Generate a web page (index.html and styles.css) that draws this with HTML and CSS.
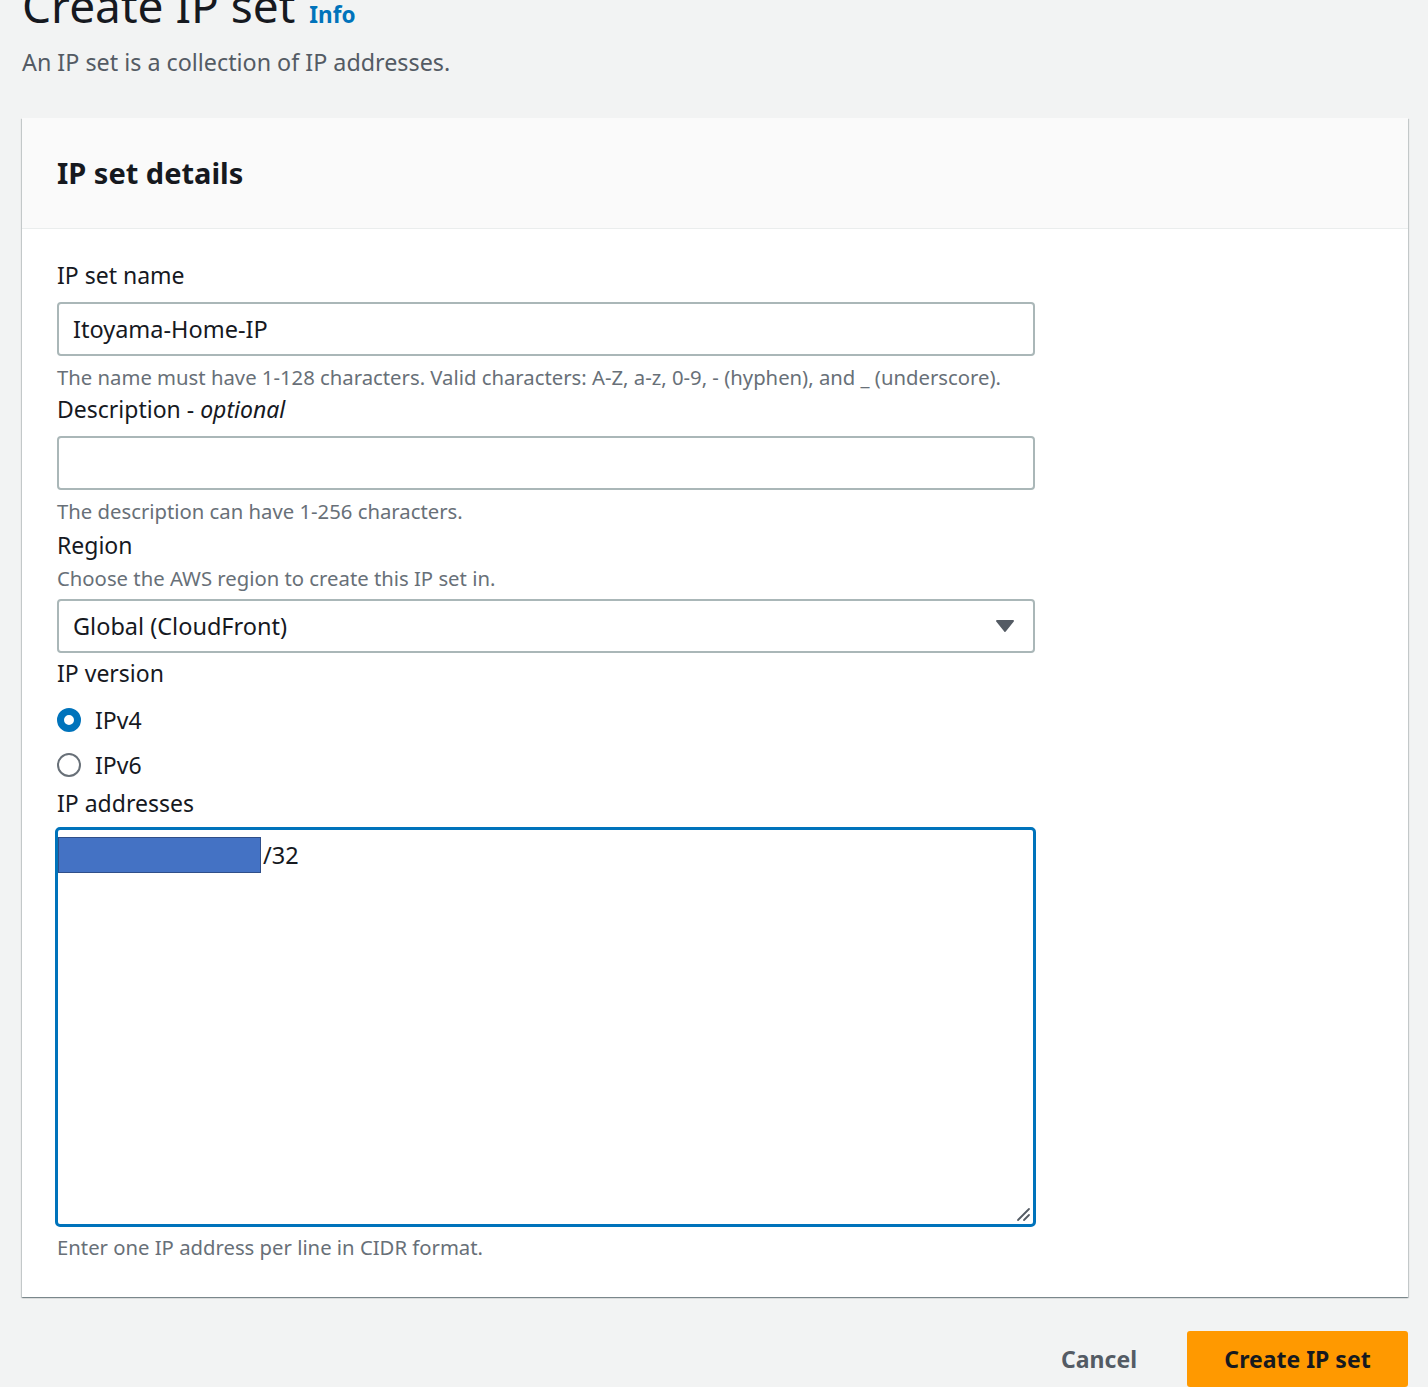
FILE: index.html
```html
<!DOCTYPE html>
<html lang="en">
<head>
<meta charset="utf-8">
<title>Create IP set</title>
<link rel="stylesheet" href="styles.css">
</head>
<body>
<div class="page">
  <header class="page-head">
    <h1 class="title">Create IP set <a class="info" href="#">Info</a></h1>
    <p class="subtitle">An IP set is a collection of IP addresses.</p>
  </header>

  <section class="card">
    <div class="card-head">
      <h2 class="card-title">IP set details</h2>
    </div>
    <div class="card-body">
      <div class="field">
        <label class="label">IP set name</label>
        <div class="input">Itoyama-Home-IP</div>
        <p class="help">The name must have 1-128 characters. Valid characters: A-Z, a-z, 0-9, - (hyphen), and _ (underscore).</p>
      </div>
      <div class="field">
        <label class="label">Description - <i>optional</i></label>
        <div class="input"></div>
        <p class="help">The description can have 1-256 characters.</p>
      </div>
      <div class="field field-region">
        <label class="label">Region</label>
        <p class="desc">Choose the AWS region to create this IP set in.</p>
        <div class="input select">
          <span>Global (CloudFront)</span>
          <svg class="caret" width="20" height="14" viewBox="0 0 20 14"><path d="M2 2 H18 L10 12 Z" fill="#545b64" stroke="#545b64" stroke-width="2" stroke-linejoin="round"/></svg>
        </div>
      </div>
      <div class="field field-radio">
        <label class="label">IP version</label>
        <div class="radios">
          <div class="radio-row"><span class="radio checked"></span><span>IPv4</span></div>
          <div class="radio-row"><span class="radio"></span><span>IPv6</span></div>
        </div>
      </div>
      <div class="field field-ta">
        <label class="label">IP addresses</label>
        <div class="textarea">
          <div class="ip-line"><span class="redact"></span><span>/32</span></div>
          <svg class="grip" width="16" height="16" viewBox="0 0 16 16"><path d="M3 14 L14 3 M9 14 L14 9" stroke="#545b64" stroke-width="1.8" stroke-linecap="round" fill="none"/></svg>
        </div>
        <p class="help">Enter one IP address per line in CIDR format.</p>
      </div>
    </div>
  </section>

  <div class="actions">
    <button class="btn-link">Cancel</button>
    <button class="btn-primary">Create IP set</button>
  </div>
</div>
</body>
</html>
```

FILE: styles.css
```css
* { box-sizing: border-box; }
html, body { margin: 0; padding: 0; }
body {
  background: #f2f3f3;
  font-family: "Noto Sans", "Open Sans", sans-serif;
  color: #16191f;
  overflow: hidden;
}
.page {
  padding: 0 20px 0 22px;
}
.page-head {
  margin-top: -19px;
}
.title {
  margin: 0;
  font-size: 46px;
  line-height: 48px;
  font-weight: 400;
  color: #16191f;
}
.info {
  font-size: 22.5px;
  font-weight: 700;
  color: #0073bb;
  text-decoration: none;
  margin-left: 2px;
}
.subtitle {
  margin: 7px 0 0;
  font-size: 23.3px;
  line-height: 32px;
  color: #545b64;
}
.card {
  margin-top: 40px;
  background: #fff;
  box-shadow: 0 1px 1px 0 rgba(0,28,36,0.3), 1px 1px 1px 0 rgba(0,28,36,0.15), -1px 1px 1px 0 rgba(0,28,36,0.15);
}
.card-head {
  height: 111px;
  display: flex;
  align-items: center;
  padding: 0 35px;
  background: #fafafa;
  border-bottom: 1px solid #eaeded;
}
.card-title {
  margin: 0;
  font-size: 29px;
  font-weight: 700;
  line-height: 40px;
}
.card-body {
  padding: 30px 35px 36px;
  display: flex;
  flex-direction: column;
  gap: 2px;
}
.field {
  display: flex;
  flex-direction: column;
  width: 978px;
}
.label {
  font-size: 23px;
  line-height: 32px;
  color: #16191f;
  margin-bottom: 11px;
}
.label i { font-style: italic; }
.input {
  height: 54px;
  border: 2px solid #aab7b8;
  border-radius: 4px;
  background: #fff;
  padding: 0 14px;
  display: flex;
  align-items: center;
  font-size: 23.5px;
  color: #16191f;
}
.help {
  margin: 7px 0 0;
  font-size: 20.3px;
  line-height: 28px;
  color: #687078;
}
.field-region {
  margin-top: 2px;
}
.desc {
  margin: -8px 0 7px;
  font-size: 20.3px;
  line-height: 28px;
  color: #687078;
}
.select {
  justify-content: space-between;
  padding-right: 18px;
}
.caret { display: block; }
.field-radio {
  margin-top: 2px;
}
.radios {
  display: flex;
  flex-direction: column;
  gap: 13px;
  margin-top: 4px;
  margin-bottom: 3px;
}
.radio-row {
  display: flex;
  align-items: center;
  gap: 14px;
  height: 32px;
  font-size: 23px;
}
.radio {
  width: 24px;
  height: 24px;
  border-radius: 50%;
  border: 2px solid #687078;
  background: #fff;
  flex: none;
}
.radio.checked {
  border: 7px solid #0073bb;
}
.field-ta {
  margin-top: 1px;
}
.field-ta .label {
  margin-bottom: 8px;
}
.field-ta .help {
  margin-top: 6px;
}
.textarea {
  position: relative;
  height: 400px;
  border: 3px solid #0073bb;
  border-radius: 5px;
  background: #fff;
  margin-left: -2px;
  width: 981px;
  padding: 7px 0 0 0;
}
.ip-line {
  display: flex;
  align-items: center;
  font-size: 23.5px;
  height: 36px;
}
.redact {
  width: 203px;
  height: 36px;
  background: #4472c4;
  border: 1px solid #2f4f8a;
  margin-right: 2px;
}
.grip {
  position: absolute;
  right: 2px;
  bottom: 2px;
}
.actions {
  display: flex;
  justify-content: flex-end;
  align-items: center;
  margin-top: 34px;
  gap: 36px;
}
.btn-link {
  background: none;
  border: none;
  font-family: inherit;
  font-size: 23px;
  font-weight: 700;
  color: #545b64;
  padding: 0 14px;
}
.btn-primary {
  background: #ff9900;
  border: none;
  border-radius: 3px;
  width: 221px;
  height: 56px;
  font-family: inherit;
  font-size: 23px;
  font-weight: 700;
  color: #16191f;
}
```
